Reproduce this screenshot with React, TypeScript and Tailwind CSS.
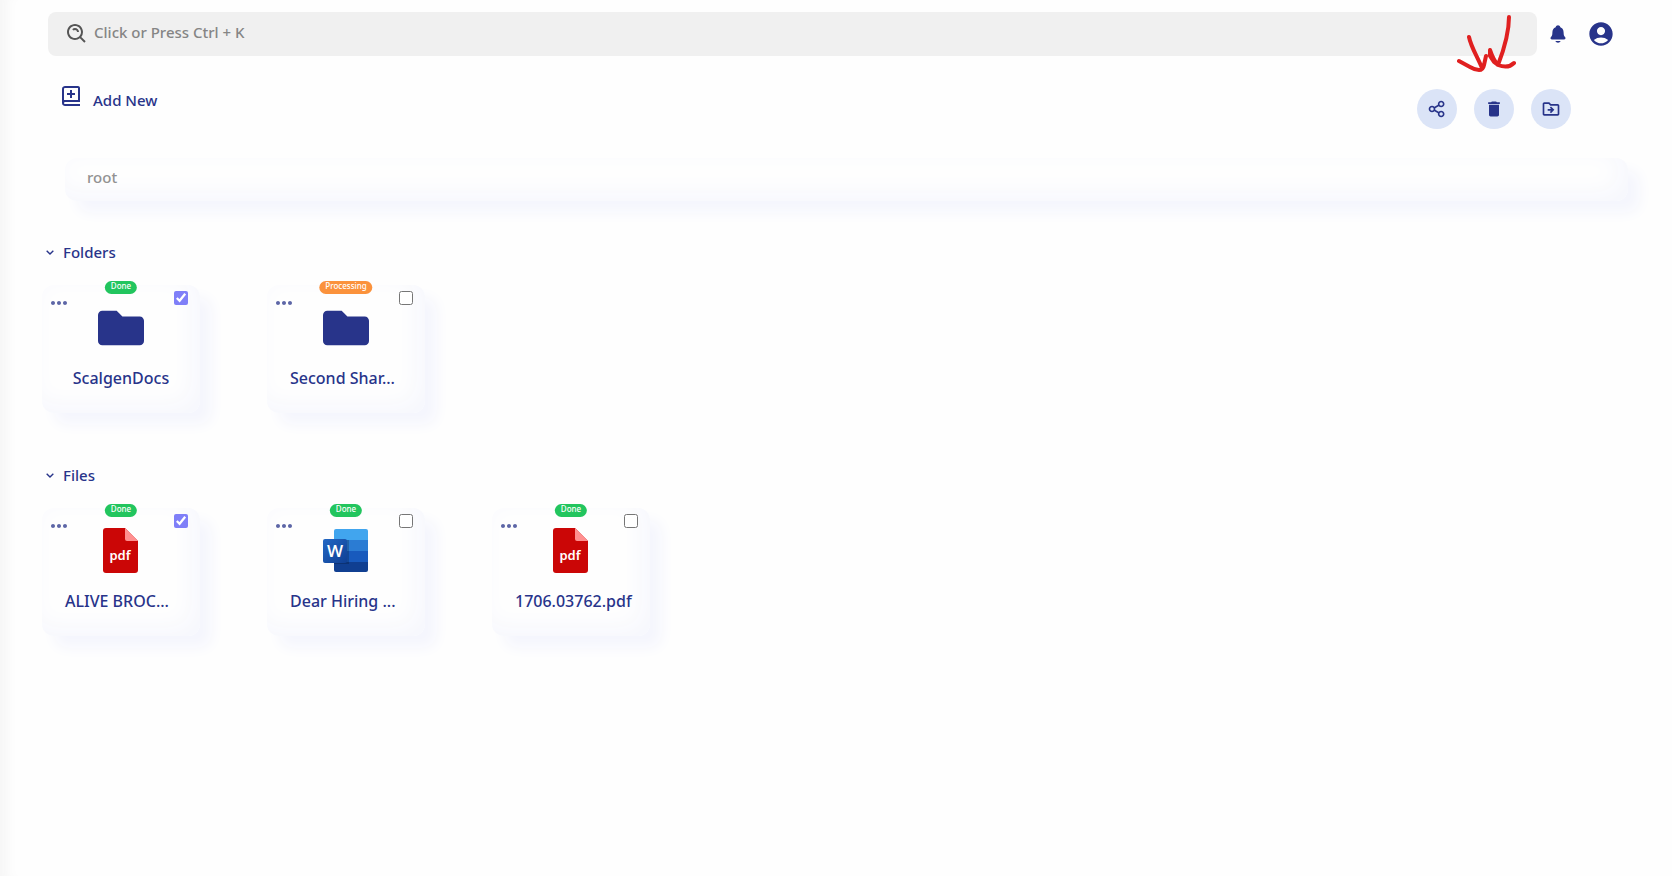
import React, { useState } from "react";
import {
  BiBookAdd,
  BiChevronDown,
  BiDotsHorizontalRounded,
  BiSearchAlt,
} from "react-icons/bi";
import { FaFolder } from "react-icons/fa";
import { IoNotifications } from "react-icons/io5";
import {
  MdAccountCircle,
  MdDelete,
  MdOutlineDriveFileMove,
} from "react-icons/md";
import { RiShareLine } from "react-icons/ri";

type Status = "Done" | "Processing";
type Kind = "folder" | "pdf" | "word";

interface Item {
  id: string;
  name: string;
  kind: Kind;
  status: Status;
  checked: boolean;
}

const folders: Item[] = [
  { id: "f1", name: "ScalgenDocs", kind: "folder", status: "Done", checked: true },
  { id: "f2", name: "Second Shar...", kind: "folder", status: "Processing", checked: false },
];

const files: Item[] = [
  { id: "d1", name: "ALIVE BROC...", kind: "pdf", status: "Done", checked: true },
  { id: "d2", name: "Dear Hiring ...", kind: "word", status: "Done", checked: false },
  { id: "d3", name: "1706.03762.pdf", kind: "pdf", status: "Done", checked: false },
];

function PdfIcon() {
  return (
    <svg viewBox="0 0 46 46" className="h-[46px] w-[46px]" aria-hidden="true">
      <path d="M8 0h19l13 13v29a3 3 0 0 1-3 3H8a3 3 0 0 1-3-3V3a3 3 0 0 1 3-3z" fill="#cb0606" />
      <path d="M27 0l13 13H29a2 2 0 0 1-2-2z" fill="#ff8f8f" />
      <text x="22" y="32" textAnchor="middle" fontFamily="Noto Sans, sans-serif" fontSize="13" fontWeight="600" fill="#fff">
        pdf
      </text>
    </svg>
  );
}

function WordIcon() {
  return (
    <svg viewBox="0 0 46 46" className="h-[46px] w-[46px]" aria-hidden="true">
      <defs>
        <clipPath id="page">
          <rect x="11" y="1" width="34" height="43" rx="2" />
        </clipPath>
        <linearGradient id="tile" x1="0" y1="0" x2="1" y2="1">
          <stop offset="0" stopColor="#2368c4" />
          <stop offset="1" stopColor="#0f3f94" />
        </linearGradient>
      </defs>
      <g clipPath="url(#page)">
        <rect x="11" y="1" width="34" height="11" fill="#41a5ee" />
        <rect x="11" y="12" width="34" height="11" fill="#2b7cd3" />
        <rect x="11" y="23" width="34" height="11" fill="#185abd" />
        <rect x="11" y="34" width="34" height="10" fill="#103f91" />
        <rect x="11" y="12" width="15" height="24" fill="#000" opacity="0.2" />
      </g>
      <rect x="0" y="11" width="24" height="24" rx="2" fill="url(#tile)" />
      <text x="12" y="29" textAnchor="middle" fontFamily="Open Sans, sans-serif" fontSize="17" fontWeight="600" fill="#fff">
        W
      </text>
    </svg>
  );
}

function ItemIcon({ kind }: { kind: Kind }) {
  if (kind === "pdf") return <PdfIcon />;
  if (kind === "word") return <WordIcon />;
  return <FaFolder className="h-[46px] w-[46px]" />;
}

function ItemCard({ item }: { item: Item }) {
  const [checked, setChecked] = useState(item.checked);
  const truncated = item.name.endsWith("...");

  return (
    <div className="relative flex h-32 w-[158px] flex-col items-center rounded-xl pt-5 shadow-[12px_12px_14px_#f5f6fd,inset_-8px_-8px_24px_#f6f7fd]">
      <span
        className={`absolute -top-1 left-1/2 h-[13px] -translate-x-1/2 rounded-full px-1.5 text-[8px] leading-[9px] font-medium text-white ${
          item.status === "Done" ? "bg-[#22c55e]" : "bg-[#fb923c]"
        }`}
      >
        {item.status}
      </span>
      <button aria-label={`Options for ${item.name}`} className="absolute top-1.5 left-[5px] opacity-75">
        <BiDotsHorizontalRounded className="h-6 w-6" />
      </button>
      <input
        type="checkbox"
        aria-label={`Select ${item.name}`}
        checked={checked}
        onChange={() => setChecked(!checked)}
        className="absolute top-1.5 right-3 h-3.5 w-3.5 accent-[#7f7ff8]"
      />
      <ItemIcon kind={item.kind} />
      <p
        className={`mt-[15px] w-28 text-base leading-6 font-medium whitespace-nowrap ${
          truncated ? "text-left" : "text-center"
        }`}
      >
        {item.name}
      </p>
    </div>
  );
}

function Section({ title, items }: { title: string; items: Item[] }) {
  const [open, setOpen] = useState(true);

  return (
    <section className="pb-[50px]">
      <button onClick={() => setOpen(!open)} className="flex items-center gap-[5px] text-[15px] leading-6 font-medium">
        <BiChevronDown className="h-4 w-4" />
        {title}
      </button>
      {open && (
        <div className="mt-[21px] flex flex-wrap gap-[67px]">
          {items.map((item) => (
            <ItemCard key={item.id} item={item} />
          ))}
        </div>
      )}
    </section>
  );
}

export default function App() {
  return (
    <div className="min-h-screen bg-[#fefefe] pt-3 font-['Noto_Sans',sans-serif] text-[#28348a] shadow-[inset_16px_0_16px_-12px_#f3f3f3]">
      <header className="flex items-center pr-[57px] pl-12">
        <label className="flex h-11 flex-1 items-center gap-[5px] rounded-lg bg-[#f0f0f0] pl-[17px]">
          <BiSearchAlt className="h-6 w-6 text-[#555]" />
          <input
            type="text"
            aria-label="Search"
            placeholder="Click or Press Ctrl + K"
            className="flex-1 bg-transparent pb-1 text-[15px] font-medium outline-none placeholder:text-[#858585]"
          />
        </label>
        <button aria-label="Notifications" className="ml-[11px]">
          <IoNotifications className="h-5 w-5" />
        </button>
        <button aria-label="Account" className="ml-[19px]">
          <MdAccountCircle className="h-7 w-7" />
        </button>
      </header>

      <div className="flex items-start justify-between pr-[101px] pl-[59px]">
        <button className="mt-7 flex items-start gap-2.5 text-[15px] leading-6 font-medium">
          <BiBookAdd className="h-6 w-6" />
          <span className="mt-1">Add New</span>
        </button>
        <div className="relative mt-[33px] flex gap-[17px]">
          <button aria-label="Share" className="flex h-10 w-10 items-center justify-center rounded-full bg-[#dbe4f7]">
            <RiShareLine className="h-5 w-5" />
          </button>
          <button aria-label="Delete" className="flex h-10 w-10 items-center justify-center rounded-full bg-[#dbe4f7]">
            <MdDelete className="h-5 w-5" />
          </button>
          <button aria-label="Move" className="flex h-10 w-10 items-center justify-center rounded-full bg-[#dbe4f7]">
            <MdOutlineDriveFileMove className="h-5 w-5" />
          </button>
          <svg
            viewBox="0 0 60 60"
            className="pointer-events-none absolute -top-[75px] left-10 h-[60px] w-[60px]"
            fill="none"
            stroke="#e02020"
            strokeWidth="4"
            strokeLinecap="round"
            strokeLinejoin="round"
            aria-hidden="true"
          >
            <path d="M12 23C14 33 20 42 25 54M2 47L13 53Q18 56 22 56Q26 56 27 51L29 42M52 3C52 20 46 38 41 51C37 47 35 42 33 36V42L37 48L41 51Q51 55 57 49" />
          </svg>
        </div>
      </div>

      <nav
        aria-label="Breadcrumb"
        className="mt-[29px] mr-11 ml-[65px] h-[43px] rounded-xl pl-[22px] text-[15px] leading-[38px] font-medium shadow-[12px_12px_14px_#f5f6fd,inset_-8px_-8px_24px_#f6f7fd]"
      >
        <a href="#root" className="text-[#929292]">
          root
        </a>
      </nav>

      <main className="mt-[39px] pl-[42px]">
        <Section title="Folders" items={folders} />
        <Section title="Files" items={files} />
      </main>
    </div>
  );
}
